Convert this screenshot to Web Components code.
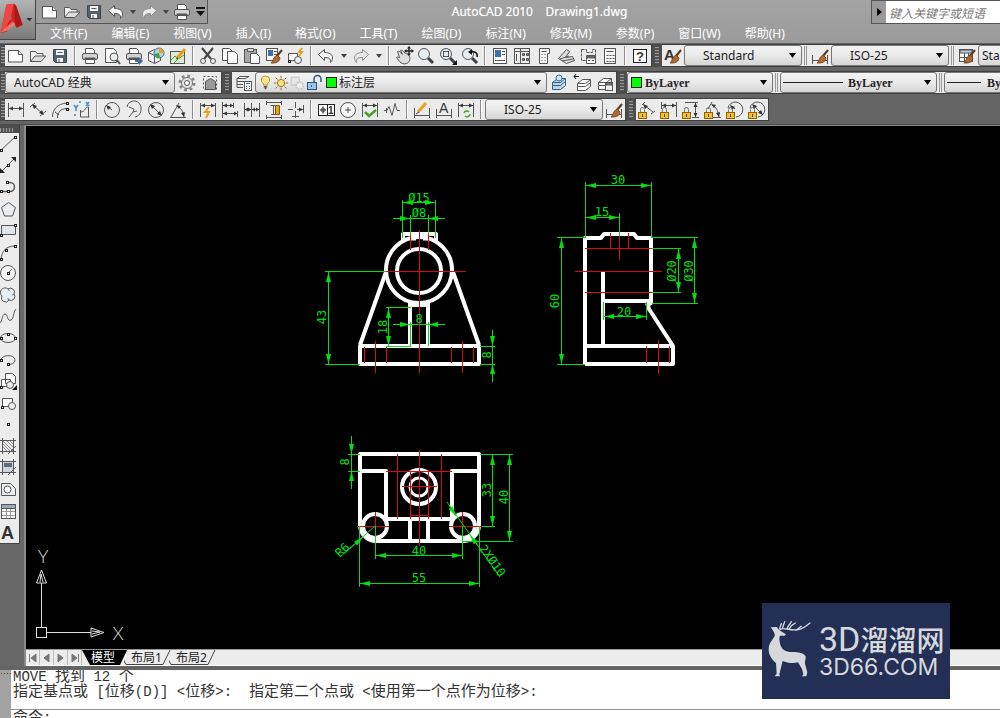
<!DOCTYPE html>
<html lang="zh-CN">
<head>
<meta charset="utf-8">
<title>AutoCAD 2010 - Drawing1.dwg</title>
<style>
html,body{margin:0;height:100%;overflow:hidden}
body{font:12px/16px "Noto Sans","Noto Sans CJK SC",sans-serif;color:#222}
</style>
</head>
<body>
<cad-app></cad-app>
<script>
const G = '#4aa02c', B = '#3f6fae', O = '#e8a020';
const page = '<path fill="#fdfdfd" d="M2.500 4.500h10l4 4v7.500h-14z"/><path fill="#ddd" d="M12.500 4.500v4h4"/>';
const folder = '<path fill="#f4f4f4" d="M2.500 15.500v-10h5l1.500 2h6v2.500"/><path fill="#dcdcdc" d="M2.500 15.500l4.500-5.500h11l-5 5.500z"/>';
const floppy = '<path fill="#56606c" stroke="#3d454f" d="M3.500 3.500h13v13h-11l-2-2z"/><path fill="#f2f2f2" stroke="none" d="M6 4h8v5h-8zM7 12h6v4h-6z"/><path d="M7.500 6.500h5M9 13v3"/>';
const printer = '<path fill="#fff" d="M5.500 7.500v-5h7l2 2v3"/><rect x="2.500" y="7.500" width="15" height="6" rx="1.500" fill="#d2d2d2"/><path fill="#555" d="M5 12h10v2h-10z"/><path fill="#fff" d="M5.500 13.500h9v4h-9z"/>';
const undo = '<path fill="#fafafa" d="M2.500 8.500l6-5v3c5 0 8 2 8 5.500 0 2-1 3.500-2 4.500.500-4-2-5-6-5v3z"/>';
const redo = '<path fill="#e8e8e8" stroke="#8c8c8c" d="M17.500 8.500l-6-5v3c-5 0-8 2-8 5.500 0 2 1 3.500 2 4.500-.500-4 2-5 6-5v3z"/>';
const lens = '<path stroke="#3a3f46" stroke-width="3" d="M12 12l5 5"/><circle cx="8" cy="8" r="5.500" fill="#e6eef2" stroke="#555"/>';
const brush = '<path stroke="#5a3a20" stroke-width="2" d="M18 4l-5 6"/><path fill="#b06a30" stroke="#7a4420" d="M13 9l3 3c-1 5-5 5-9 5 2-1 2-6 6-8z"/>';
const lock = '<path stroke="#777" d="M3.500 12v-2.500a2 2 0 0 1 4 0v2.500"/><rect x="1.500" y="12.500" width="8" height="6" fill="#f2c230" stroke="#8a6400"/><path stroke="#5a4200" d="M5.500 14v3"/>';
const a = '#333';
const hd = (x1,x2,y) => `<path d="M${x1}.500 3v14M${x2}.500 3v14M${x1} ${y}.500h${x2-x1}"/><path fill="${a}" stroke="none" d="M${x1+1} ${y}.500l4-2v4zM${x2} ${y}.500l-4-2v4z"/>`;
const n = (...p) => p.map(([x,y]) => `<rect x="${x-1}.500" y="${y-1}.500" width="2" height="2" fill="#fff" stroke="#222"/>`).join('');
const stack = '<path fill="#fff" d="M3.500 9.500h8l5-4h-8zM3.500 9.500v3h8l5-4M3.500 12.500v4h8l5-4M16.500 5.500v7"/>';
const calc = '<rect x="4.500" y="2.500" width="11" height="15" fill="#f4f4f4"/><path d="M6.500 5.500h7M6.500 9.500h2m1 0h2m1 0h2M6.500 12.500h2m1 0h2m1 0h2M6.500 15.500h2m1 0h2m1 0h2"/>';
const letter = (t,x,y,s,b) => `<text x="${x}" y="${y}" font-size="${s}" font-family="Liberation Sans,sans-serif" font-weight="${b||400}" fill="#333" stroke="none">${t}</text>`;
const ICONS = {
  new:page, open:folder, save:floppy, print:printer, undo, redo,
  preview:'<path fill="#fff" d="M3.500 2.500h8l3 3v11h-11z"/><circle cx="12" cy="11" r="4" fill="#e8eef2"/><path stroke-width="2" d="M15 14l3 4"/>',
  plot:printer+`<path stroke="${B}" stroke-width="2" d="M11 15h5"/><path fill="${B}" stroke="none" d="M15 11l4 4-4 4z"/>`,
  cube:`<path fill="#f2f2f2" d="M2.500 6.500l6-3 6 3v8l-6 3-6-3zM2.500 6.500l6 3 6-3M8.500 9.500v8"/><circle cx="13" cy="7" r="5" fill="#a8d4e4" stroke="${B}"/><path fill="${O}" stroke="none" d="M13 2a5 5 0 0 1 5 5h-5z"/><path fill="${G}" stroke="none" d="M9 8l4-1 1 5c-3 0-5-1-5-4z"/>`,
  map:`<rect x="2.500" y="5.500" width="14" height="12" fill="#dcebd4"/><path stroke="${G}" d="M3 14l4-4 3 3 6-4M6 17l4-4"/><path stroke="${O}" stroke-width="3" d="M9 12l8-9"/><path stroke="#5a3a20" d="M8 13l2-1"/>`,
  cut:'<path stroke="#444" stroke-width="2" d="M4 2l9 11M15 2l-9 11"/><circle cx="5" cy="15" r="2.500" fill="#eee"/><circle cx="15" cy="15" r="2.500" fill="#eee"/>',
  copy:'<path fill="#fff" d="M2.500 2.500h7l3 3v9h-10z"/><path fill="#fff" d="M7.500 5.500h7l3 3v9h-10z"/>',
  paste:'<rect x="2.500" y="3.500" width="12" height="13" fill="#a8a8a8"/><path fill="#ddd" d="M5.500 2.500h6v3h-6z"/><path fill="#fff" d="M8.500 7.500h6l3 3v7h-9z"/>',
  match:`<rect x="2.500" y="2.500" width="11" height="12" fill="#fff"/><path fill="${B}" stroke="none" d="M4 4h5v6h-5z"/><path d="M10 5.500h3M10 8.500h3"/>${brush}`,
  block:`<path fill="#fff" d="M2.500 7.500h9v6M2.500 7.500v7h7"/><circle cx="12" cy="14" r="3.500" fill="#eee"/>${n([3,15])}<path stroke="${O}" stroke-width="2" d="M16 2l-3 4h3l-3 4"/>`,
  pan:'<path fill="#ddd" d="M3.500 5.500c1-1 2 0 3 1l2 2-2-4c1-1 2 0 3 1l2 2c1 0 3 1 4 3 1 3 0 6-3 7-3 1-5 0-7-2l-3-4c1-1 2 0 3 0z"/><path stroke="#222" stroke-width="1.500" d="M15 1v8M11 5h8"/><path fill="#222" stroke="none" d="M15 0l2 2.500h-4zM20 5l-2.500 2v-4zM10 5l2.500 2v-4zM15 10l2-2.500h-4z"/>',
  zoom:lens, zoomwin:lens+'<rect x="5.500" y="5.500" width="5" height="5"/><path fill="#111" stroke="none" d="M19 14v5h-5z"/>',
  zoomprev:lens+'<path stroke="#111" stroke-width="1.500" d="M17 11c1-4-2-6-6-5"/><path fill="#111" stroke="none" d="M8 6l4-3v6z"/>',
  props:`<rect x="3.500" y="2.500" width="13" height="15" fill="#fff"/><path fill="${B}" stroke="none" d="M5 4h6v7h-6z"/><path d="M12 5.500h3M12 8.500h3M5 14.500h10"/>`,
  dc:'<rect x="2.500" y="2.500" width="15" height="15" fill="#eee"/><path fill="#888" d="M8.500 2v16M3 5.500h15M4.500 8v7M10.500 7.500h2v2h-2zM14.500 7.500h2v2h-2zM10.500 12.500h2v2h-2zM14.500 12.500h2v2h-2z"/>',
  palette:'<path fill="#f4f4f4" d="M5.500 2.500h10v5h-2v10h-8z"/><path d="M7.500 5.500h5M7.500 8.500h1m2 0h1M7.500 11.500h1m2 0h1M7.500 14.500h1m2 0h1"/>',
  sheet:'<path fill="#ddd" d="M2.500 12.500l8-9 3 2-4 6 7-1 2 4-8 3z"/><path d="M4 13l9-3M6 15l11-2"/>',
  markup:'<path stroke-dasharray="3 1" d="M3.500 3.500h5v3h6v-3h3v6M3.500 3.500v11h4"/><path fill="#fff" d="M8.500 9.500h9v8h-9z"/><path fill="#777" d="M9 10h8v2h-8zM10 14.500h2m2 0h2"/>',
  calc, help:'<rect x="3.500" y="3.500" width="13" height="13" fill="#fff" stroke="#222"/>'+letter('?',6,15,13,700),
  textstyle:letter('A',1,14,15,700)+brush,
  dimstyle:'<path d="M2.500 9v9M17.500 9v9M3 14.500h14"/>'+brush,
  tablestyle:'<rect x="2.500" y="3.500" width="13" height="12" fill="#fff"/><path fill="#bcd" d="M3 4h12v3h-12zM3 11.500h12M7.500 7v8M11.500 7v8"/>'+brush,
  gear:'<circle cx="10" cy="10" r="7" stroke-width="3" stroke="#888" stroke-dasharray="2.700 2.800"/><circle cx="10" cy="10" r="5.500" fill="#e4e4e4" stroke="#777"/><circle cx="10" cy="10" r="2.500" fill="#fff"/>',
  wsave:'<rect x="3.500" y="3.500" width="13" height="13" stroke-dasharray="2 2" /><path fill="#999" d="M5.500 8.500l5-3 5 3v8h-10z"/>',
  layerprop:'<path fill="#fff" d="M3 5.500h8l4-2h-9zM3 8.500h8M3 11.500h6M3 14.500h6M3 5.500v9"/><rect x="10.500" y="8.500" width="7" height="9" fill="#fff"/><path stroke="#3f6fae" d="M12 10.500h4M12 13.500h1m2 0h1M12 15.500h1m2 0h1"/>',
  layercur:'<g stroke="#3a5f80">'+stack.replace('#fff','#b8d4e8')+'</g><circle cx="10" cy="5" r="3" fill="#cfe3f0" stroke="#3f6fae"/>',
  layerprev:`<g transform="translate(2 1)">${stack}</g><path stroke="#111" d="M2 3.500h5M4 1l-2 2.500L4 6"/>`,
  layerstate:stack+'<rect x="10.500" y="9.500" width="7" height="8" fill="#eee"/><path fill="#888" d="M11 10h6v2h-6z"/>',
  bulb:'<path fill="#ffe68a" stroke="#b08820" d="M10 2.500a4.500 4.500 0 0 1 2.500 8.500v2h-5v-2a4.500 4.500 0 0 1 2.500-8.500z"/><path stroke="#555" stroke-width="2" d="M8 15h4M9 17h2"/>',
  sun:'<circle cx="10" cy="10" r="4" fill="#ffe07a" stroke="#8a6a20"/><path stroke="#8a6a20" d="M10 2v3M10 15v3M2 10h3M15 10h3M4 4l2 2M14 14l2 2M16 4l-2 2M6 14l-2 2"/>',
  vpfreeze:'<path stroke="#c4c4c4" fill="#e6e6e6" d="M3.500 3.500h9v9h-9z"/><circle cx="13" cy="13" r="4" stroke="#c4c4c4" fill="#eee" stroke-dasharray="2 1" stroke-width="2"/>',
  unlock:'<rect x="3.500" y="9.500" width="9" height="7" fill="#9cc4e4" stroke="#2a5580"/><path stroke="#2a5580" stroke-width="1.500" d="M10 9V6a3.500 3.500 0 0 1 7 0v3"/><path stroke="#2a5580" d="M7.500 12v2"/>',
  dlin:hd(2,17,8),
  dali:'<path d="M2 7l5-4M12 16l6-5M5 5l10 9"/><path fill="#333" stroke="none" d="M4 4l5 2-3 3zM16 15l-5-2 3-3z"/>',
  darc:'<path d="M2.500 17c0-8 5-13 14-14M7.500 18c0-6 3-9 9-9.500M5 12l4 3"/>'+n([17,3],[17,9]),
  dord:'<path d="M8.500 10v7h9M8.500 12c5 0 5-6 8-5v10"/><path stroke="#3f8fc8" stroke-width="1.500" d="M2 5l2 3 2-3M4 8v3M14 2l3 4M17 2l-3 4M7 2h2M2 15h2"/>',
  drad:'<circle cx="10" cy="10" r="7.500"/><path d="M10 10l-5-4"/><path fill="#333" stroke="none" d="M4 5l5 2-3 3z"/>',
  djog:'<path d="M3 7a7 7 0 0 1 14 2c0 4-2 7-6 8M5 7l5 2-1 3 4-1M9 12l-4 5"/>',
  ddia:'<circle cx="10" cy="10" r="7.500"/><path d="M5 5l10 10"/><path fill="#333" stroke="none" d="M4 4l5 2-3 3zM16 16l-5-2 3-3z"/>',
  dang:'<path d="M2 17.500h16M3 17l8-14M9 6c4 2 6 5 7 11"/><path fill="#333" stroke="none" d="M8 5l5 1-2 3zM16 17l-3-4 4-1z"/>',
  dquick:hd(2,17,5)+`<path stroke="${O}" stroke-width="2" d="M11 7l-4 5h4l-3 6"/>`,
  dbase:'<path d="M2.500 2v16M13.500 3v5M17.500 11v6M3 5.500h10M3 13.500h14"/><path fill="#333" stroke="none" d="M3 5.500l4-2v4zM3 13.500l4-2v4zM13 5.500l-3-2v4zM17 13.500l-3-2v4z"/>',
  dcont:'<path d="M2.500 3v14M9.500 3v14M17.500 3v14M3 9.500h14"/><path fill="#333" stroke="none" d="M3 9.500l3-2v4zM9 9.500l-3-2v4zM10 9.500l3-2v4zM17 9.500l-3-2v4z"/>',
  dspace:`<path d="M2 2.500h16M2 17.500h16M2.500 1v4M17.500 1v4M2.500 15v4M17.500 15v4M6.500 5.500h5M9.500 6v9M7 14.500h5"/><path fill="${O}" stroke="#8a5a00" d="M11.500 5.500h4v9h-4z"/>`,
  dbreak:'<path d="M9.500 2v6M9.500 11v7M17.500 5v8M2 9.500h5M11 9.500h6M6 16.500h7"/><path fill="#333" stroke="none" d="M17 9.500l-4-2v4z"/>',
  tol:'<rect x="2.500" y="4.500" width="16" height="11" fill="#fff" stroke="#222"/><path stroke="#222" d="M11.500 5v10M4 10h6M7 6.500v7"/><circle cx="7" cy="10" r="2"/>'+letter('1',12,14,10,700),
  center:'<circle cx="10" cy="10" r="7.500" fill="#f6f6f6"/><path d="M7 10h6M10 7v6"/>',
  inspect:hd(2,17,5)+`<path stroke="${G}" stroke-width="2.500" d="M5 12l4 4 7-6"/>`,
  jogline:'<path d="M2 10.500h3l2-4 3 9 3-12 2 7h3M4.500 8v5"/>',
  dimedit:`<path d="M2.500 8v10M17.500 8v10M3 15.500h14"/><path stroke="${O}" stroke-width="3" d="M6 12l8-9"/><path stroke="#533" d="M4 14l3-2"/>`,
  dimtedit:'<path d="M2.500 9v9M17.500 9v9M3 15.500h14"/>'+letter('A',5,13,14),
  dimupd:hd(2,17,5)+`<path stroke="${G}" stroke-width="1.500" d="M8 13a3 3 0 0 1 5-1M14 14a3 3 0 0 1-5 2"/>`,
  k1:'<path d="M5 5l3-3M14 14l4-3M7 5l9 7"/><path fill="#333" stroke="none" d="M6 4l5 2-3 3z"/>'+lock,
  k2:'<path d="M2.500 2v7M17.500 2v15M3 5.500h14"/><path fill="#333" stroke="none" d="M3 5.500l4-2v4zM17 5.500l-4-2v4z"/>'+lock,
  k3:'<path d="M4 2.500h13M11 17.500h7M14.500 3v14"/><path fill="#333" stroke="none" d="M14.500 3l-2 4h4zM14.500 17l-2-4h4z"/>'+lock,
  k4:'<path d="M10 17.500h8M5 9l4-7M9 5c4 2 6 5 7 12"/><path fill="#333" stroke="none" d="M8 4l5 1-2 3zM16 17l-3-4 4-1z"/>'+lock,
  k5:'<path d="M3 8a7.500 7.500 0 1 1 8 9M10 9L6 6"/><path fill="#333" stroke="none" d="M5 5l5 2-3 3z"/>'+lock,
  k6:'<path d="M3 8a7.500 7.500 0 1 1 8 9M6 5l9 9"/><path fill="#333" stroke="none" d="M5 4l5 2-3 3zM16 15l-5-2 3-3z"/>'+lock,
  line:'<path d="M3 16L17 3"/>'+n([3,16],[17,3]),
  xline:'<path d="M4 16L16 4"/><path fill="#222" stroke="none" d="M2 18v-5l5 5zM18 2v5l-5-5z"/>'+n([10,10]),
  pline:'<path stroke-width="1.500" d="M3 14.500h9a4 4 0 0 0 0-9h-3"/>'+n([3,14],[10,14],[9,5]),
  polygon:'<path fill="#e8edf2" d="M10.500 3.500l7 5-3 8.500h-8l-3-8.500z"/>',
  rect:'<path fill="#dfe5ea" d="M3.500 5.500h14v9h-14z"/>'+n([3,15],[17,5]),
  arc:'<path d="M3 17C4 9 8 4 17 4"/>'+n([3,17],[8,8],[17,4]),
  circle:'<circle cx="10" cy="10" r="7.500" fill="#f2f2f2"/><path d="M10 10l4-4"/>'+n([10,10]),
  cloud:'<path fill="#e8edf2" d="M10 4a4 4 0 0 1 6 5 4 4 0 0 1-5 6 4 4 0 0 1-7-4 4 4 0 0 1 6-7zM10 4c1 1 1 2 1 2M16 9c-1 1-2 1-2 1M11 15c-1-1-1-2-1-2"/>',
  spline:'<path d="M2 17c2-1 2-9 5-9s2 8 6 6c3-1 2-8 5-11"/>',
  ellipse:'<ellipse cx="10" cy="10" rx="7.500" ry="4.500" fill="#eee"/>'+n([3,10],[17,10],[10,6]),
  earc:'<path d="M3 10a7 4.500 0 1 1 9 4.500"/>'+n([3,10],[10,14]),
  insert:'<path fill="#fff" d="M7.500 2.500h7l3 3v7h-10zM3.500 8.500h9v7h-9z"/><circle cx="12" cy="14" r="3.500" fill="#eee"/><path fill="#111" stroke="none" d="M19 14v5h-5z"/>'+n([3,16]),
  mkblock:'<path fill="#fff" d="M4.500 5.500h10v8h-10z"/><circle cx="14" cy="13" r="3.500" fill="#eee"/>'+n([4,14]),
  point:n([10,10]),
  hatch:'<path d="M4.500 2v16M15.500 2v16M2 4.500h16M2 15.500h16M10 18l8-8"/><path stroke="#888" d="M5 11l4 4M5 8l7 7M5 5l10 10M9 5l6 6M12 5l3 3"/>',
  gradient:'<path fill="#cdd4db" d="M4.500 4.500h11v11h-11z"/><path d="M4.500 2v16M15.500 2v16M2 4.500h16M2 15.500h16M10 18l8-8"/><path fill="#5e6b78" stroke="none" d="M6 6h8v4h-8z"/>',
  region:'<path fill="#e8edf2" d="M3.500 4.500h9l5 5v7h-14z"/><circle cx="9.500" cy="10.500" r="3.500" fill="#fff"/>',
  table:'<rect x="3.500" y="3.500" width="14" height="14" fill="#fff"/><path fill="#9ab" stroke="none" d="M4 4h13v3h-13z"/><path stroke="#999" d="M4 10.500h13M4 14.500h13M8.500 8v9M12.500 8v9"/><path d="M4 7.500h13"/>',
  mtext:letter('A',3,17,18,700)
};
const LABELS = {new:'新建',open:'打开',save:'保存',print:'打印',undo:'放弃',redo:'重做',cut:'剪切',copy:'复制',paste:'粘贴',help:'帮助'};
const svg = (name,size=20) => `<svg width="${size}" height="${size}" viewBox="0 0 20 20" fill="none" stroke="#555" aria-hidden="true">${ICONS[name]}</svg>`;
const define = (tag, render) => customElements.define(tag, class extends HTMLElement {
  connectedCallback(){ if(!this.shadowRoot) this.attachShadow({mode:'open'}).innerHTML = render(this); }
});

define('tool-set', el => {
  const parts = el.getAttribute('items').split(' ').map(k =>
    k === '|' ? '<i class="sep"></i>' :
    k === 'v' ? '<button class="more" aria-label="更多"><b></b></button>' :
    `<button aria-label="${LABELS[k]||k}">${svg(k)}</button>`);
  return `<style>
    :host{display:flex;align-items:center;flex:none}
    :host([vertical]){flex-direction:column;height:410px}
    button{all:unset;width:var(--btn,22px);height:21px;display:flex;align-items:center;justify-content:center;flex:none}
    :host([vertical]) button{flex:1;width:20px;height:auto;margin-left:-4px}
    svg{flex:none}
    .more{width:var(--more,13px)}
    .more b{border:3px solid transparent;border-top:4px solid #444;border-bottom:0}
    .sep{width:2px;height:19px;margin:0 3px;box-sizing:border-box;border-left:1px solid #8c8c8c;border-right:1px solid #fff}
  </style>${parts.join('')}`;
});

define('tool-bar', () => `<style>
  :host{display:flex;height:23px;flex:none}
  .grip{width:var(--grip,5px);flex:none;background:repeating-linear-gradient(#999 0 1px,#555 1px 3px) center/4px 17px no-repeat,#4d4d4d}
  .bar{display:flex;align-items:center;flex:1;box-sizing:border-box;background:#ebebeb;border:1px solid #3f3f3f;border-left:0;overflow:hidden}
  </style><div class="grip"></div><div class="bar" role="toolbar"><slot></slot></div>`);

define('combo-box', el => `<style>
  :host{display:flex;position:relative;flex:none;height:21px}
  select{appearance:none;width:100%;height:21px;box-sizing:border-box;margin:0;border:1px solid #777;border-radius:3px;padding:0 12px 0 var(--indent,6px);
    background:linear-gradient(#f4f4f4,#e9e9e9 50%,#d6d6d6);font:inherit;font-size:12px;color:#222}
  svg.arrow{position:absolute;right:6px;top:8px;pointer-events:none}
  ::slotted(*){position:absolute;left:3px;top:0;height:21px;display:flex;align-items:center;pointer-events:none}
  </style><select aria-label="${el.getAttribute('label')}"><option>${el.getAttribute('value')}</option></select>
  <slot></slot><svg class="arrow" width="7" height="5"><path d="M0 0h7L3.500 5z"/></svg>`);

define('layer-flags', () => `<style>svg{margin-right:-1px;margin-left:-1px}b{width:9px;height:9px;background:#0f0;border:1px solid #222;margin-left:3px}</style>
  ${svg('bulb',17)}${svg('sun',18)}${svg('vpfreeze',18)}${svg('unlock',20)}<b></b>`);
define('color-chip', () => `<style>b{width:9px;height:9px;background:#0f0;border:1px solid #222;margin-left:1px}</style><b></b>`);
define('line-sample', () => `<style>i{width:var(--len,60px);height:1px;background:#222}</style><i></i>`);

define('app-header', () => `<style>
  :host{display:flex;height:43px;flex:none;background:linear-gradient(#a3a3a3,#9b9b9b);color:#fff}
  .logo{all:unset;box-sizing:border-box;width:36px;height:40px;flex:none;border-right:1px solid #444;border-bottom:1px solid #444;background:linear-gradient(#b4b4b4,#7a7a7a)}
  .col{flex:1;min-width:0}
  .top{display:flex;height:24px}
  .qat{display:flex;box-sizing:border-box;width:172px;height:24px;padding-left:3px;border:1px solid #555;border-top:0;border-left:0;background:#9d9d9d;--more:11px}
  .qat svg{align-self:center;margin-left:3px}
  h1{flex:1;margin:0;text-align:center;font-weight:400;font-size:12px;line-height:24px;white-space:pre;text-shadow:0 0 1px #fff8}
  .find{display:flex;box-sizing:border-box;width:129px;height:24px;border:1px solid #555;border-right:0;background:#999}
  .find button{all:unset;width:14px;display:flex;align-items:center;justify-content:center}
  .find input{flex:1;min-width:0;border:0;border-radius:0;padding:0 3px;background:#fff;font:italic 12px "Noto Sans CJK SC",sans-serif}
  .find input::placeholder{color:#777;opacity:1}
  nav{display:flex;padding-left:2px}
  nav a{padding:0 12px;line-height:20px;color:#fff;text-decoration:none;white-space:nowrap}
  </style>
  <button class="logo" aria-label="应用程序菜单"><svg width="35" height="39" viewBox="0 0 105 117">
    <path fill="#d42020" d="M19 14l24-3 6 8 19 55-18 9-8-14-14 6-8 20-18 4z"/>
    <path fill="#f2453f" d="M19 14l22-3-8 40-10 20-4 22-17 6z"/>
    <path fill="#8d0c0c" d="M43 11l6 8 19 55-18 9-6-14z" opacity=".5"/>
    <path fill="#8e7474" d="M31 42l5 15-9 4z"/>
    <path fill="#ff8078" d="M4 96l34-32 8 8-26 20z" opacity=".7"/>
    <path fill="#333" d="M79 54h18l-9 10z"/></svg></button>
  <div class="col"><div class="top">
    <div class="qat"><tool-set items="new open save undo v redo v print"></tool-set><svg width="9" height="9"><path fill="#111" d="M0 0h9v2H0zM0 4h9L4.500 9z"/></svg></div>
    <h1>AutoCAD 2010    Drawing1.dwg</h1>
    <div class="find"><button aria-label="展开"><svg width="5" height="8"><path d="M0 0l5 4-5 4z"/></svg></button><input aria-label="搜索" placeholder="键入关键字或短语"></div>
  </div><nav>${['文件(F)','编辑(E)','视图(V)','插入(I)','格式(O)','工具(T)','绘图(D)','标注(N)','修改(M)','参数(P)','窗口(W)','帮助(H)'].map(t=>`<a href="#">${t}</a>`).join('')}</nav></div>`);

define('tool-rows', () => `<style>
  :host{display:flex;flex-direction:column;gap:4px;padding:1px 0 3px;background:#646464;border-bottom:1px solid #4a4a4a;overflow:hidden;flex:none}
  .row{display:flex}
  .mid{--btn:23px}
  .wide{--grip:10px}
  .fill{flex:1 0 auto}
  .w118{width:118px}
  .std{--indent:18px}
  .sep{width:1px;height:19px;margin:0 2px;flex:none;border-left:1px solid #999;border-right:1px solid #999}
  .by{font-family:"Liberation Serif",serif;font-weight:700}
  </style>
  <div class="row"><tool-bar><tool-set items="new open save | print preview plot cube map | cut copy paste match block | undo v redo v | pan zoom zoomwin zoomprev | props dc palette sheet markup calc | help"></tool-set></tool-bar>
    <tool-bar class="wide fill"><tool-set items="textstyle"></tool-set><combo-box class="w118 std" label="文字样式" value="Standard"></combo-box><i class="sep"></i><tool-set items="dimstyle"></tool-set><combo-box class="w118 std" label="标注样式" value="ISO-25"></combo-box><i class="sep"></i><tool-set items="tablestyle"></tool-set><combo-box class="w118" style="--indent:3px" label="表格样式" value="Standard"></combo-box></tool-bar></div>
  <div class="row mid"><tool-bar><combo-box style="width:170px;--indent:8px" label="工作空间" value="AutoCAD 经典"></combo-box><tool-set items="gear wsave"></tool-set></tool-bar>
    <tool-bar class="wide"><tool-set items="layerprop"></tool-set><combo-box style="width:292px;--indent:83px" label="图层" value="标注层"><layer-flags></layer-flags></combo-box><tool-set items="layercur layerprev layerstate"></tool-set></tool-bar>
    <tool-bar class="wide fill by"><combo-box style="width:146px;--indent:17px" label="颜色" value="ByLayer"><color-chip></color-chip></combo-box><i class="sep"></i><combo-box style="width:157px;--indent:67px" label="线型" value="ByLayer"><line-sample></line-sample></combo-box><i class="sep"></i><combo-box style="width:157px;--indent:42px;--len:34px" label="线宽" value="ByLayer"><line-sample></line-sample></combo-box></tool-bar></div>
  <div class="row"><tool-bar><tool-set items="dlin dali darc dord | drad djog ddia dang | dquick dbase dcont dspace dbreak | tol center inspect jogline | dimedit dimtedit dimupd |"></tool-set><combo-box class="w118 std" label="标注样式" value="ISO-25"></combo-box><tool-set items="dimstyle"></tool-set></tool-bar>
    <tool-bar class="wide"><tool-set items="k1 k2 k3 k4 k5 k6"></tool-set></tool-bar></div>`);

define('draw-palette', () => `<style>
  :host{display:block;box-sizing:border-box;width:20px;flex:none;align-self:flex-start;background:#ececec;border-right:1px solid #444;border-bottom:1px solid #444;overflow:hidden}
  .grip{height:8px;background:repeating-linear-gradient(90deg,#999 0 1px,#555 1px 3px) 0 3px/13px 4px no-repeat,#4d4d4d}
  </style><div class="grip"></div><tool-set vertical items="line xline pline polygon rect arc circle cloud spline ellipse earc insert mkblock point hatch gradient region table mtext"></tool-set>`);

/* Dimension line with arrow heads at both ends, plus its label. */
const dim = (x1,y1,x2,y2,t,tx,ty,rot) => `<path class="g both" d="M${x1} ${y1}L${x2} ${y2}"/>` + lab(t,tx,ty,rot);
const lab = (t,x,y,rot) => `<text ${rot ? `transform="translate(${x} ${y}) rotate(${rot})"` : `x="${x}" y="${y}"`}>${t}</text>`;

define('drawing-canvas', () => `<style>
  :host{display:block;flex:1;min-height:0;background:#000;overflow:hidden}
  svg{display:block;width:100%;height:100%}
  path,circle,rect{fill:none}
  .w{stroke:#fff;stroke-width:4;stroke-linejoin:round}
  .w3{stroke:#fff;stroke-width:3}
  .r{stroke:#d80c0c}
  .g{stroke:#00e010}
  .both{marker-start:url(#ah);marker-end:url(#ah)}
  .end{marker-end:url(#ah)}
  text{fill:#00e010;font:12px "DejaVu Sans Mono",monospace;text-anchor:middle}
  .ucs{stroke:#ddd}
  .ucs text{fill:#ddd;stroke:none;font:18px Lato,sans-serif;font-weight:300}
  </style>
  <svg role="img" aria-label="轴承座三视图"><defs><marker id="ah" markerUnits="userSpaceOnUse" markerWidth="10" markerHeight="6" refX="10" refY="3" orient="auto-start-reverse"><path d="M0 .500L10 3L0 5.500z" style="fill:#00e010"/></marker></defs>
  <g transform="translate(-26 -126)">
   <g class="front">
    <rect class="w" x="360" y="346" width="119" height="18"/>
    <circle class="w" cx="419" cy="270" r="33"/><circle class="w" cx="419" cy="271" r="22"/>
    <path class="w" d="M403 241v-7h33v7M386 272l-26 73M453 272l26 73M410 302v43M428 302v43M410 305h18"/>
    <path class="w3" d="M410 239h6M423 239h6"/>
    <path class="r" d="M419.500 230v143M386 271.500h80M410.500 234v16M428.500 234v16M364.500 347v16M386.500 347v16M375.500 341v32M451.500 347v16M473.500 347v16M462.500 341v32"/>
    <path class="g" d="M402.500 200v38M435.500 200v38M410.500 215v19M428.500 215v19M410 218.500h18M325 271.500h61M325 364.500h35M386 307.500h25M386 346.500h25M410.500 322v24M428.500 322v24M410 324.500h18M480 346.500h15M480 364.500h15M492.500 346v18"/>
    <path class="g end" d="M393 218.500h17"/><path class="g end" d="M445 218.500h-17"/><path class="g end" d="M393 324.500h17"/><path class="g end" d="M445 324.500h-17"/><path class="g end" d="M492.500 330v16"/><path class="g end" d="M492.500 382v-18"/>
    ${dim(403,202.5,435,202.5,'Ø15',419,202)}${lab('Ø8',419,217)}${dim(328.5,272,328.5,364,'43',326,317,-90)}${dim(388.5,308,388.5,346,'18',387,327,-90)}${lab('8',419,323)}${lab('8',491,355,-90)}
   </g>
   <g class="side">
    <path class="w" d="M585 364V238H601l3-4h30l3 4h14v65l-4 3M603 301h48M603 271v75M585 346h88v18h-88M647 303l2 6 24 37"/>
    <path class="r" d="M585 248.500h67M585 292.500h67M575 271.500h87M610.500 233v15M628.500 233v15M619.500 234v26M646.500 346v17M669.500 346v17M658.500 340v34"/>
    <path class="g" d="M585.500 182v56M651.500 182v56M619.500 213v23M603.500 302v18M646.500 302v18M652 248.500h29M652 292.500h29M652 237.500h46M652 303.500h46M557 237.500h28M557 364.500h28"/>
    ${dim(586,185.5,651,185.5,'30',618,184)}${dim(586,217.5,619,217.5,'15',602,216)}${dim(604,316.5,646,316.5,'20',624,316)}${dim(678.5,249,678.5,292,'Ø20',676,271,-90)}${dim(694.5,238,694.5,303,'Ø30',693,271,-90)}${dim(561.5,238,561.5,364,'60',559,301,-90)}
   </g>
   <g class="top">
    <path class="w" d="M375 541A16 16 0 0 1 360 525V454H479V525A16 16 0 0 1 463 541H375M360 471h26v48M479 471h-27v48M375 519h88M410 519v22M428 519v22"/>
    <circle cx="375" cy="526" r="12" class="w" style="fill:#000"/><circle cx="463" cy="526" r="12" class="w" style="fill:#000"/>
    <circle class="w" cx="419" cy="487" r="17"/><circle class="w3" cx="419" cy="487" r="9"/>
    <path class="r" d="M419.500 450v96M402 486.500h35M397.500 454v65M441.500 454v65M386 471.500h66M410.500 471v48M428.500 471v48M410 515.500h18M375.500 512v29M357 526.500h32M462.500 512v29M449 526.500h33"/>
    <path class="g" d="M348 454.500h12M348 471.500h12M351.500 454v17M480 454.500h33M482 526.500h13M463 541.500h50M375.500 526v33M462.500 526v33M359.500 526v61M479.500 526v61M375 526L340 557M447 502l53 75"/>
    <path class="g end" d="M351.500 436v18"/><path class="g end" d="M351.500 489v-18"/><path class="g end" d="M345 553l18-16"/><path class="g end" d="M449 505l7 11"/><path class="g end" d="M478 546l-8-11"/>
    ${lab('8',349,462,-90)}${dim(492.5,455,492.5,526,'33',491,490,-90)}${dim(509.5,455,509.5,541,'40',508,497,-90)}${dim(376,555.5,462,555.5,'40',419,555)}${dim(360,583.5,479,583.5,'55',419,582)}${lab('R6',345,553,-42)}${lab('2XØ10',489,563,54)}
   </g>
   <g class="ucs"><rect x="36.500" y="627.500" width="10" height="10"/><path d="M41.500 627V583M36.500 583l5-13 5 13zM40 582l1-8 2 8M47 632.500h44M91 628v9l13-4.500zM92 631l8 1-8 2"/><text x="43" y="563">Y</text><text x="118" y="640">X</text></g>
  </g></svg>`);

define('layout-tabs', () => `<style>
  :host{display:flex;height:15px;flex:none;background:#ececec;border-top:1px solid #999;border-bottom:1px solid #fff;box-sizing:content-box}
  button{all:unset}
  .nav{box-sizing:border-box;width:14px;height:15px;display:flex;align-items:center;justify-content:center;border-right:1px solid #bbb}
  .nav:first-child{width:13px}
  svg{display:block}
  .nav path{fill:#777;stroke:#777}
  .tab{position:relative;width:45px;height:15px;text-align:center;line-height:15px;color:#222}
  .tab svg{position:absolute;left:0;top:0}
  .tab span{position:relative}
  .on{width:42px;color:#fff}
  </style>
  ${['M2.500 1v8M9 1v8L4 5z','M8 1v8L3 5z','M3 1v8L8 5z','M9.500 1v8M3 1v8L8 5z'].map((d,i)=>`<button class="nav" aria-label="${['第一个','上一个','下一个','最后一个'][i]}"><svg width="11" height="10"><path d="${d}"/></svg></button>`).join('')}
  <button class="tab on"><svg width="45" height="15"><path d="M0 0h45l-7 15H8z"/></svg><span>模型</span></button>
  <button class="tab"><svg width="48" height="15" fill="none" stroke="#444"><path d="M-1 9l3 5.500h37L46 0"/></svg><span>布局1</span></button>
  <button class="tab"><svg width="48" height="15" fill="none" stroke="#444"><path d="M-1 9l3 5.500h37L46 0"/></svg><span>布局2</span></button>`);

define('command-window', () => `<style>
  :host{display:flex;height:48px;flex:none;overflow:hidden;border-top:4px solid #646464;color:#333;font-family:"Liberation Mono",monospace;font-size:14px}
  .strip{width:11px;flex:none;background:radial-gradient(circle,#444 0 1px,transparent 1px) 0 2px/3px 3px repeat-x,#a2a2a2}
  .log{flex:1;min-width:0;background:#fff}
  p,label{display:block;margin:0;padding-left:2px;white-space:pre;line-height:15px;height:15px}
  b{font:400 15px/1px "Noto Sans CJK SC",sans-serif}
  label{margin-top:9px;border-top:1px solid #999;padding-top:1px}
  input{border:0;outline:0;width:50%;font:inherit;padding:0}
  </style><div class="strip"></div><div class="log">
  <p>MOVE <b>找到</b> 12 <b>个</b></p>
  <p><b>指定基点或</b> [<b>位移</b>(D)] &lt;<b>位移</b>&gt;:  <b>指定第二个点或</b> &lt;<b>使用第一个点作为位移</b>&gt;:</p>
  <label><b>命令</b>: <input></label></div>`);

define('site-mark', () => `<style>
  :host{position:absolute;right:50px;bottom:19px;width:188px;height:96px;background:#232f54;color:#d6d8dc;overflow:hidden}
  svg{position:absolute;left:0;top:0}
  .name{position:absolute;left:57px;top:18px;line-height:36px;white-space:nowrap;display:flex;align-items:center}
  .name span{font:400 34px/36px Roboto,sans-serif}
  .name b{font:500 28px/36px "Noto Sans CJK SC",sans-serif}
  .url{position:absolute;left:57px;top:51px;font:400 23px/26px Inter,sans-serif}
  </style><svg width="188" height="96" viewBox="0 0 564 288"><path fill="#d6d8dc" d="M26 73L44 72 52 82 72 94 68 98 54 98C50 105 53 115 55 125C60 140 70 146 90 147C110 147 126 150 131 160C132 168 128 174 129 182L136 208 133 220H120L124 214 120 198 108 178C95 182 75 180 62 174L58 190 52 214 54 220H38L44 212 42 180C30 170 20 155 20 140C20 122 30 112 38 100C40 92 34 84 26 73Z"/>
  <g fill="none" stroke="#d6d8dc" stroke-width="4" stroke-linecap="round"><path d="M54 80c8-10 26 4 54 0 16-2 26-12 36-20M54 80c-2-8 2-12 4-18M62 76c0-8 4-12 6-20M76 76c2-8 8-12 12-20M100 60l-12 8-6 10M102 82l16-12"/></g></svg>
  <div class="name"><span>3D</span><b>溜溜网</b></div><div class="url">3D66.COM</div>`);

define('cad-app', () => `<style>
  :host{display:flex;flex-direction:column;position:relative;height:100vh;background:#686868}
  main{display:flex;flex:1;min-height:0}
  .view{display:flex;flex-direction:column;flex:1;min-width:0;margin-left:4px;border-left:2px solid #8a8a8a;border-top:1px solid #8a8a8a}
  </style><app-header></app-header><tool-rows></tool-rows>
  <main><draw-palette></draw-palette><div class="view"><drawing-canvas></drawing-canvas><layout-tabs></layout-tabs></div></main>
  <command-window></command-window><site-mark></site-mark>`);
</script>
</body>
</html>
